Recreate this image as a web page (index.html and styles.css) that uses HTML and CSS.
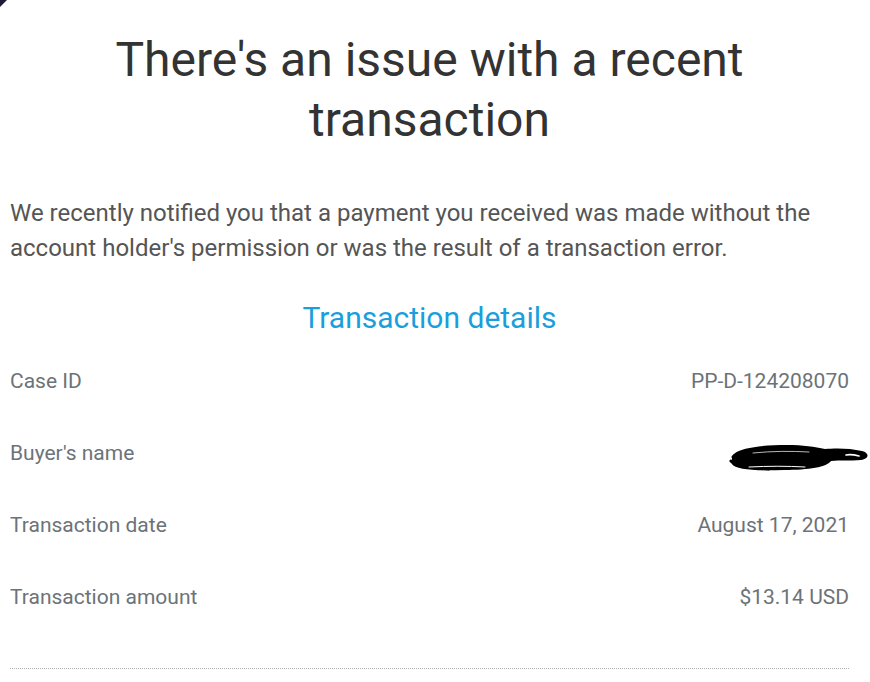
FILE: index.html
```html
<!DOCTYPE html>
<html lang="en">
<head>
<meta charset="utf-8">
<link rel="stylesheet" href="styles.css">
</head>
<body>
<div class="corner"></div>
<main class="card">
  <h1 class="title">There's an issue with a recent transaction</h1>
  <p class="intro">We recently notified you that a payment you received was made without the account holder's permission or was the result of a transaction error.</p>
  <h2 class="subtitle">Transaction details</h2>
  <div class="details">
    <div class="row"><span class="label">Case ID</span><span class="value">PP-D-124208070</span></div>
    <div class="row"><span class="label">Buyer's name</span><span class="value redacted">
      <svg class="scribble" width="140" height="32" viewBox="0 0 140 32">
        <path d="M3 19 C3 10 28 6 58 6 C74 6 86 8 96 10 C106 9 121 9 133 12 C141 14 140 20 132 21 C121 22 111 21 102 22 C98 28 80 31 55 31 C30 32 6 31 3 25 Z" fill="#000"/>
        <path d="M4 18 C10 12 30 9 60 8 M2 22 C6 27 20 29 40 30" fill="none" stroke="#000" stroke-width="3" stroke-linecap="round"/>
        <path d="M24 14 C44 12 62 12 80 13" fill="none" stroke="#fff" stroke-width="0.9" stroke-linecap="round" opacity="0.8"/>
        <path d="M20 28 C40 27 58 27 76 28" fill="none" stroke="#fff" stroke-width="1" stroke-linecap="round"/>
        <path d="M117 16 C122 15 126 16 130 17" fill="none" stroke="#fff" stroke-width="1.6" stroke-linecap="round"/>
      </svg>
    </span></div>
    <div class="row"><span class="label">Transaction date</span><span class="value">August 17, 2021</span></div>
    <div class="row"><span class="label">Transaction amount</span><span class="value">$13.14 USD</span></div>
  </div>
  <div class="divider"></div>
</main>
</body>
</html>
```
FILE: styles.css
```css
html, body {
  margin: 0;
  padding: 0;
  background: #fff;
}
body {
  font-family: Roboto, "Liberation Sans", sans-serif;
  width: 870px;
  height: 682px;
  overflow: hidden;
  position: relative;
}
.corner {
  position: absolute;
  left: 0;
  top: 0;
  width: 0;
  height: 0;
  border-top: 7px solid #1c1c3a;
  border-right: 7px solid transparent;
}
.card {
  padding: 30px 21px 0 10px;
}
.title {
  margin: 0;
  font-size: 48px;
  font-weight: 400;
  line-height: 60px;
  color: #333;
  text-align: center;
  padding: 0 80px;
}
.intro {
  margin: 46px 0 0 0;
  font-size: 24px;
  line-height: 35px;
  color: #555;
}
.subtitle {
  margin: 32px 0 0 0;
  font-size: 30px;
  font-weight: 400;
  line-height: 40px;
  color: #1a9fdc;
  text-align: center;
}
.details {
  margin-top: 7px;
}
.row {
  display: flex;
  justify-content: space-between;
  align-items: center;
  height: 72px;
  font-size: 21px;
  color: #6c7378;
}
.redacted {
  display: flex;
  margin-right: -20px;
  margin-top: 4px;
}
.divider {
  margin-top: 35px;
  border-top: 1px dotted #b0b0b0;
}
```
